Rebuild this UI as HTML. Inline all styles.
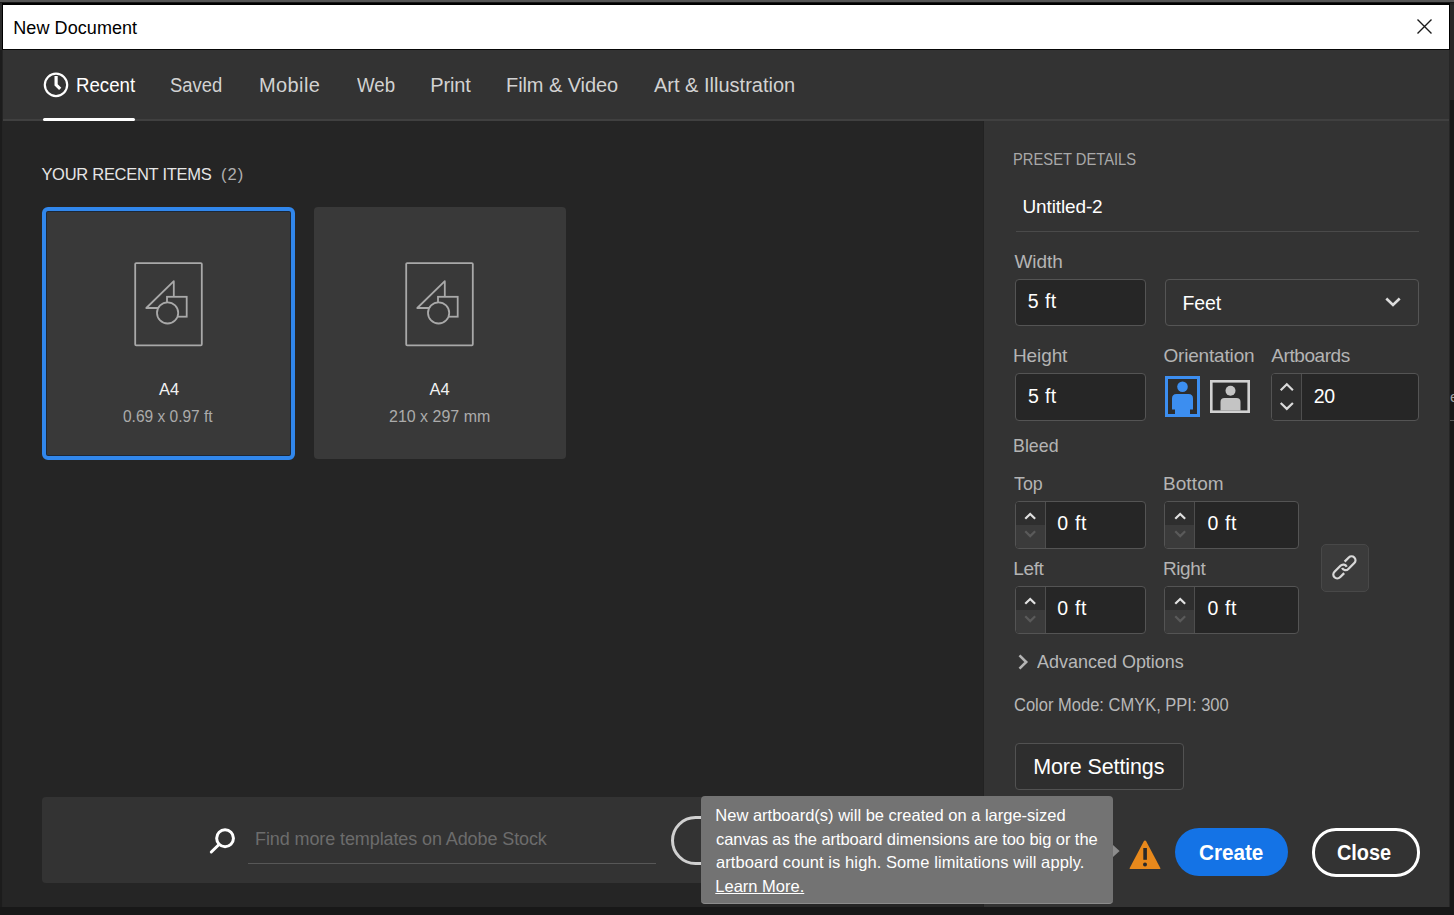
<!DOCTYPE html>
<html><head><meta charset="utf-8">
<style>
*{box-sizing:border-box;margin:0;padding:0}
html,body{width:1454px;height:915px;overflow:hidden;background:#262626;font-family:"Liberation Sans",sans-serif;position:relative}
.a{position:absolute}
.t{position:absolute;white-space:nowrap;line-height:1}
svg{position:absolute;overflow:visible}
</style></head><body>
<!-- frame -->
<div class="a" style="left:0;top:0;width:1454px;height:2px;background:#555"></div>
<div class="a" style="left:0;top:2px;width:1454px;height:1px;background:#181818"></div>
<div class="a" style="left:2px;top:3px;width:1448px;height:2px;background:#000"></div><div class="a" style="left:0;top:3px;width:2px;height:2px;background:#262626"></div><div class="a" style="left:1450px;top:3px;width:4px;height:2px;background:#222"></div>
<div class="a" style="left:0;top:5px;width:2px;height:45px;background:#2c2c2c"></div>
<div class="a" style="left:1450px;top:5px;width:4px;height:95px;background:#282828"></div>
<div class="a" style="left:1450px;top:100px;width:4px;height:815px;background:#181818"></div>
<div class="a" style="left:2px;top:5px;width:1px;height:45px;background:#000"></div>
<div class="a" style="left:1449px;top:5px;width:1px;height:45px;background:#000"></div>
<div class="a" style="left:2px;top:49px;width:1448px;height:1px;background:#080808"></div>
<!-- title bar -->
<div class="a" style="left:3px;top:5px;width:1446px;height:44px;background:#fff"></div>
<svg style="left:1417px;top:19px" width="15" height="15" viewBox="0 0 15 15"><path d="M0.5 0.5L14.5 14.5M14.5 0.5L0.5 14.5" stroke="#1a1a1a" stroke-width="1.4"/></svg>

<!-- tab bar -->
<div class="a" style="left:3px;top:50px;width:1446px;height:69px;background:#333"></div>
<div class="a" style="left:3px;top:119px;width:1446px;height:2px;background:#404040"></div>
<div class="a" style="left:0;top:50px;width:2px;height:857px;background:#1c1c1c"></div><div class="a" style="left:2px;top:50px;width:1px;height:857px;background:#242424"></div>
<div class="a" style="left:43px;top:118px;width:92px;height:3px;background:#fff;border-radius:1.5px"></div>
<svg style="left:40px;top:70px" width="32" height="30" viewBox="0 0 32 30"><circle cx="16" cy="14.85" r="11.2" fill="none" stroke="#fff" stroke-width="2.2"/><path d="M16.1 5.9V14.8L20.2 18.8" fill="none" stroke="#fff" stroke-width="3.2" stroke-linecap="butt" stroke-linejoin="miter"/></svg>

<!-- content -->
<div class="a" style="left:3px;top:121px;width:981px;height:786px;background:#252525"></div>
<div class="a" style="left:983px;top:121px;width:1px;height:786px;background:#222"></div>
<div class="a" style="left:984px;top:121px;width:465px;height:786px;background:#333"></div>
<div class="a" style="left:0;top:907px;width:1454px;height:8px;background:#181818"></div>

<!-- cards -->
<div class="a" style="left:42px;top:207px;width:253px;height:253px;background:#393939;border:4px solid #3187ec;border-radius:6px;box-shadow:inset 0 0 0 1px #1c2838"></div>
<div class="a" style="left:314px;top:207px;width:252px;height:252px;background:#393939;border-radius:4px"></div>
<svg style="left:134px;top:262px" width="70" height="85" viewBox="0 0 70 85" fill="#393939" stroke="#a9a9a9" stroke-width="1.8"><rect x="1.2" y="1.1" width="66.6" height="82.2" rx="1"/><path d="M39.8 19.2L12.3 46H39.8Z" stroke-linejoin="round"/><rect x="33" y="34.8" width="19.7" height="19.9"/><circle cx="33.6" cy="50.9" r="10.6"/></svg>
<svg style="left:405px;top:262px" width="70" height="85" viewBox="0 0 70 85" fill="#393939" stroke="#a9a9a9" stroke-width="1.8"><rect x="1.2" y="1.1" width="66.6" height="82.2" rx="1"/><path d="M39.8 19.2L12.3 46H39.8Z" stroke-linejoin="round"/><rect x="33" y="34.8" width="19.7" height="19.9"/><circle cx="33.6" cy="50.9" r="10.6"/></svg>

<!-- search panel -->
<div class="a" style="left:42px;top:797px;width:930px;height:86px;background:#333;border-radius:4px"></div>
<div class="a" style="left:248px;top:863px;width:408px;height:1px;background:#575757"></div>
<svg style="left:200px;top:820px" width="40" height="40" viewBox="0 0 40 40"><circle cx="25.05" cy="18.25" r="8.4" fill="none" stroke="#fff" stroke-width="3"/><path d="M19 24.5L11.3 32" stroke="#fff" stroke-width="3" stroke-linecap="round"/></svg>
<div class="a" style="left:671px;top:816px;width:120px;height:49px;border:3px solid #d0d0d0;border-radius:25px"></div>

<!-- right panel -->
<div class="a" style="left:1016px;top:231px;width:403px;height:1px;background:#4a4a4a"></div>
<div class="a" style="left:1015px;top:279px;width:131px;height:47px;background:#262626;border:1px solid #545454;border-radius:4px"></div>
<div class="a" style="left:1165px;top:279px;width:254px;height:47px;background:#333;border:1px solid #555;border-radius:4px"></div>
<svg style="left:1385px;top:297px" width="16" height="10" viewBox="0 0 16 10"><path d="M1.3 1.5L8 8L14.7 1.5" fill="none" stroke="#dcdcdc" stroke-width="2.6"/></svg>
<div class="a" style="left:1015px;top:373px;width:131px;height:48px;background:#262626;border:1px solid #545454;border-radius:4px"></div>

<!-- orientation -->
<svg style="left:1165px;top:376px" width="36" height="42" viewBox="0 0 36 42"><rect x="1.5" y="1.5" width="32" height="38" fill="#2d2d2d" stroke="#3c8ef0" stroke-width="3"/><circle cx="17.5" cy="10.7" r="5.3" fill="#3c8ef0"/><path d="M7 38.5V22.5Q7 18 11.5 18H23.5Q28 18 28 22.5V33.5H25V38.5H10V33.5H7Z" fill="#3c8ef0"/></svg>
<svg style="left:1210px;top:380px" width="42" height="35" viewBox="0 0 42 35"><rect x="1.3" y="1.3" width="37.4" height="30.4" fill="#2d2d2d" stroke="#d2d2d2" stroke-width="2.6"/><circle cx="20.5" cy="10.8" r="5" fill="#c4c4c4"/><path d="M10.5 30.5V22Q10.5 18 14.5 18H26.5Q30.5 18 30.5 22V30.5Z" fill="#c4c4c4"/></svg>

<!-- artboards -->
<div class="a" style="left:1271px;top:373px;width:148px;height:48px;background:#262626;border:1px solid #545454;border-radius:4px;overflow:hidden"><div class="a" style="left:0;top:0;width:30px;height:46px;background:#2e2e2e;border-right:1px solid #4e4e4e"></div></div>
<svg style="left:1279px;top:382px" width="16" height="30" viewBox="0 0 16 30"><path d="M1.7 8.2L7.8 2.3L13.9 8.2M1.7 21L7.8 26.9L13.9 21" fill="none" stroke="#dadada" stroke-width="2.2"/></svg>

<!-- bleed inputs -->
<div class="a" style="left:1015px;top:501px;width:131px;height:48px;background:#262626;border:1px solid #545454;border-radius:4px;overflow:hidden"><div class="a" style="left:0;top:0;width:29px;height:23px;background:#2e2e2e"></div><div class="a" style="left:0;top:23px;width:29px;height:24px;background:#3b3b3b"></div><div class="a" style="left:29px;top:0;width:1px;height:46px;background:#4e4e4e"></div></div>
<div class="a" style="left:1164px;top:501px;width:135px;height:48px;background:#262626;border:1px solid #545454;border-radius:4px;overflow:hidden"><div class="a" style="left:0;top:0;width:29px;height:23px;background:#2e2e2e"></div><div class="a" style="left:0;top:23px;width:29px;height:24px;background:#3b3b3b"></div><div class="a" style="left:29px;top:0;width:1px;height:46px;background:#4e4e4e"></div></div>
<div class="a" style="left:1015px;top:586px;width:131px;height:48px;background:#262626;border:1px solid #545454;border-radius:4px;overflow:hidden"><div class="a" style="left:0;top:0;width:29px;height:23px;background:#2e2e2e"></div><div class="a" style="left:0;top:23px;width:29px;height:24px;background:#3b3b3b"></div><div class="a" style="left:29px;top:0;width:1px;height:46px;background:#4e4e4e"></div></div>
<div class="a" style="left:1164px;top:586px;width:135px;height:48px;background:#262626;border:1px solid #545454;border-radius:4px;overflow:hidden"><div class="a" style="left:0;top:0;width:29px;height:23px;background:#2e2e2e"></div><div class="a" style="left:0;top:23px;width:29px;height:24px;background:#3b3b3b"></div><div class="a" style="left:29px;top:0;width:1px;height:46px;background:#4e4e4e"></div></div>
<svg style="left:1022px;top:509px" width="16" height="30" viewBox="0 0 16 30"><path d="M3.25 9.8L8.2 5L13.15 9.8" fill="none" stroke="#e0e0e0" stroke-width="2.2"/><path d="M3.25 22.3L8.2 27.1L13.15 22.3" fill="none" stroke="#5a5a5a" stroke-width="2.2"/></svg>
<svg style="left:1172px;top:509px" width="16" height="30" viewBox="0 0 16 30"><path d="M3.25 9.8L8.2 5L13.15 9.8" fill="none" stroke="#e0e0e0" stroke-width="2.2"/><path d="M3.25 22.3L8.2 27.1L13.15 22.3" fill="none" stroke="#5a5a5a" stroke-width="2.2"/></svg>
<svg style="left:1022px;top:594px" width="16" height="30" viewBox="0 0 16 30"><path d="M3.25 9.8L8.2 5L13.15 9.8" fill="none" stroke="#e0e0e0" stroke-width="2.2"/><path d="M3.25 22.3L8.2 27.1L13.15 22.3" fill="none" stroke="#5a5a5a" stroke-width="2.2"/></svg>
<svg style="left:1172px;top:594px" width="16" height="30" viewBox="0 0 16 30"><path d="M3.25 9.8L8.2 5L13.15 9.8" fill="none" stroke="#e0e0e0" stroke-width="2.2"/><path d="M3.25 22.3L8.2 27.1L13.15 22.3" fill="none" stroke="#5a5a5a" stroke-width="2.2"/></svg>

<!-- link button -->
<div class="a" style="left:1321px;top:544px;width:48px;height:48px;background:#3b3b3b;border:1px solid #484848;border-radius:5px"></div>
<svg style="left:1328px;top:551px" width="34" height="34" viewBox="0 0 34 34"><g fill="none" stroke="#d8d8d8" stroke-width="2.3" transform="translate(16.4 16.4) rotate(-45)"><path d="M4.2 -3.9H10.1A3.9 3.9 0 0 1 10.1 3.9H1.65A3.9 3.9 0 0 1 -2.1 -1.2"/><path d="M-4.2 3.9H-10.1A3.9 3.9 0 0 1 -10.1 -3.9H-1.65A3.9 3.9 0 0 1 2.1 1.2"/></g></svg>

<!-- advanced chevron -->
<svg style="left:1017px;top:653px" width="14" height="18" viewBox="0 0 14 18"><path d="M2.5 2.3L9.2 9L2.5 15.7" fill="none" stroke="#b4b4b4" stroke-width="2.6"/></svg>

<!-- more settings -->
<div class="a" style="left:1015px;top:743px;width:169px;height:47px;background:#2e2e2e;border:1px solid #525252;border-radius:4px"></div>

<!-- warning -->
<svg style="left:1125px;top:836px" width="40" height="38" viewBox="0 0 40 38"><path d="M20 4.6Q20.8 4.6 21.3 5.5L35.3 32Q35.8 33 34.8 33H5.2Q4.2 33 4.7 32L18.7 5.5Q19.2 4.6 20 4.6Z" fill="#e8891c"/><rect x="18.3" y="12" width="3.6" height="11.8" fill="#2a2a2a"/><circle cx="20" cy="28.4" r="2" fill="#2a2a2a"/></svg>

<!-- create / close -->
<div class="a" style="left:1175px;top:828px;width:113px;height:48px;background:#1473e6;border-radius:24px"></div>
<div class="a" style="left:1312px;top:828px;width:108px;height:49px;border:3px solid #fff;border-radius:24px"></div>

<!-- tooltip -->
<div class="a" style="left:701px;top:796px;width:412px;height:108px;background:#737373;border-radius:4px;border-bottom:1px solid #8c8c8c"></div>
<svg style="left:1113px;top:845px" width="8" height="12" viewBox="0 0 8 12"><path d="M0 0L6.6 6L0 12Z" fill="#8c8c8c"/></svg>
<div class="a" style="left:1450px;top:420px;width:4px;height:1px;background:#5a5a5a"></div>
<div class="t" style="left:1450px;top:389px;font-size:15px;color:#a0a0a0">e</div>

<div class="t" style="left:13.3px;top:19.0px;font-size:18px;color:#000;letter-spacing:0.07px;">New Document</div>
<div class="t" style="left:76.0px;top:75.0px;font-size:20px;color:#fff;transform:scaleX(0.9331);transform-origin:0 0;">Recent</div>
<div class="t" style="left:170.2px;top:75.0px;font-size:20px;color:#d2d2d2;transform:scaleX(0.9211);transform-origin:0 0;">Saved</div>
<div class="t" style="left:259.0px;top:75.0px;font-size:20px;color:#d2d2d2;letter-spacing:0.40px;">Mobile</div>
<div class="t" style="left:356.5px;top:75.0px;font-size:20px;color:#d2d2d2;transform:scaleX(0.9333);transform-origin:0 0;">Web</div>
<div class="t" style="left:430.3px;top:75.0px;font-size:20px;color:#d2d2d2;letter-spacing:-0.14px;">Print</div>
<div class="t" style="left:506.0px;top:75.0px;font-size:20px;color:#d2d2d2;letter-spacing:-0.08px;">Film &amp; Video</div>
<div class="t" style="left:654.0px;top:75.0px;font-size:20px;color:#d2d2d2;">Art &amp; Illustration</div>
<div class="t" style="left:41.4px;top:166.0px;font-size:16.5px;color:#e6e6e6;letter-spacing:-0.28px;">YOUR RECENT ITEMS</div>
<div class="t" style="left:221.0px;top:166.0px;font-size:16.5px;color:#b0b0b0;letter-spacing:1.09px;">(2)</div>
<div class="t" style="left:158.9px;top:381.0px;font-size:16.5px;color:#f2f2f2;letter-spacing:0.07px;">A4</div>
<div class="t" style="left:123.1px;top:408.0px;font-size:17px;color:#ababab;transform:scaleX(0.9118);transform-origin:0 0;">0.69 x 0.97 ft</div>
<div class="t" style="left:429.4px;top:381.0px;font-size:16.5px;color:#f2f2f2;letter-spacing:0.18px;">A4</div>
<div class="t" style="left:389.2px;top:408.0px;font-size:17px;color:#ababab;transform:scaleX(0.9400);transform-origin:0 0;">210 x 297 mm</div>
<div class="t" style="left:255.0px;top:830.0px;font-size:18px;color:#6c6c6c;letter-spacing:-0.10px;">Find more templates on Adobe Stock</div>
<div class="t" style="left:1013.2px;top:151.0px;font-size:17px;color:#a9a9a9;transform:scaleX(0.8670);transform-origin:0 0;">PRESET DETAILS</div>
<div class="t" style="left:1022.5px;top:197.0px;font-size:19px;color:#fff;letter-spacing:-0.13px;">Untitled-2</div>
<div class="t" style="left:1014.4px;top:252.0px;font-size:19px;color:#b4b4b4;letter-spacing:-0.04px;">Width</div>
<div class="t" style="left:1027.8px;top:292.0px;font-size:19.5px;color:#fff;letter-spacing:0.42px;">5 ft</div>
<div class="t" style="left:1182.4px;top:294.0px;font-size:19.5px;color:#fff;letter-spacing:-0.08px;">Feet</div>
<div class="t" style="left:1013.0px;top:346.0px;font-size:19px;color:#b4b4b4;letter-spacing:-0.11px;">Height</div>
<div class="t" style="left:1163.4px;top:346.0px;font-size:19px;color:#b4b4b4;letter-spacing:-0.17px;">Orientation</div>
<div class="t" style="left:1271.3px;top:346.0px;font-size:19px;color:#b4b4b4;letter-spacing:-0.44px;">Artboards</div>
<div class="t" style="left:1028.0px;top:387.0px;font-size:19.5px;color:#fff;letter-spacing:0.35px;">5 ft</div>
<div class="t" style="left:1313.7px;top:387.0px;font-size:19.5px;color:#fff;letter-spacing:-0.40px;">20</div>
<div class="t" style="left:1013.1px;top:436.0px;font-size:19px;color:#b4b4b4;transform:scaleX(0.9373);transform-origin:0 0;">Bleed</div>
<div class="t" style="left:1014.3px;top:474.0px;font-size:19px;color:#b4b4b4;transform:scaleX(0.9390);transform-origin:0 0;">Top</div>
<div class="t" style="left:1162.9px;top:474.0px;font-size:19px;color:#b4b4b4;letter-spacing:0.12px;">Bottom</div>
<div class="t" style="left:1057.2px;top:514.0px;font-size:19.5px;color:#fff;letter-spacing:0.75px;">0 ft</div>
<div class="t" style="left:1207.5px;top:514.0px;font-size:19.5px;color:#fff;letter-spacing:0.58px;">0 ft</div>
<div class="t" style="left:1013.2px;top:559.0px;font-size:19px;color:#b4b4b4;letter-spacing:-0.33px;">Left</div>
<div class="t" style="left:1162.9px;top:559.0px;font-size:19px;color:#b4b4b4;letter-spacing:-0.36px;">Right</div>
<div class="t" style="left:1057.2px;top:599.0px;font-size:19.5px;color:#fff;letter-spacing:0.75px;">0 ft</div>
<div class="t" style="left:1207.5px;top:599.0px;font-size:19.5px;color:#fff;letter-spacing:0.58px;">0 ft</div>
<div class="t" style="left:1037.1px;top:652.0px;font-size:19px;color:#b8b8b8;transform:scaleX(0.9456);transform-origin:0 0;">Advanced Options</div>
<div class="t" style="left:1013.5px;top:696.0px;font-size:18px;color:#b8b8b8;transform:scaleX(0.9170);transform-origin:0 0;">Color Mode: CMYK, PPI: 300</div>
<div class="t" style="left:1033.2px;top:757.0px;font-size:21.5px;color:#fff;letter-spacing:-0.12px;">More Settings</div>
<div class="t" style="left:1198.6px;top:842.0px;font-size:22px;color:#fff;font-weight:700;transform:scaleX(0.9391);transform-origin:0 0;">Create</div>
<div class="t" style="left:1337.0px;top:842.0px;font-size:22px;color:#fff;font-weight:700;transform:scaleX(0.9030);transform-origin:0 0;">Close</div>
<div class="t" style="left:715.3px;top:807.0px;font-size:16.5px;color:#fff;">New artboard(s) will be created on a large-sized</div>
<div class="t" style="left:716.0px;top:831.0px;font-size:16.5px;color:#fff;letter-spacing:-0.07px;">canvas as the artboard dimensions are too big or the</div>
<div class="t" style="left:716.0px;top:854.0px;font-size:16.5px;color:#fff;letter-spacing:0.09px;">artboard count is high. Some limitations will apply.</div>
<div class="t" style="left:715.3px;top:878.0px;font-size:16.5px;color:#fff;text-decoration:underline;">Learn More.</div>

</body></html>
